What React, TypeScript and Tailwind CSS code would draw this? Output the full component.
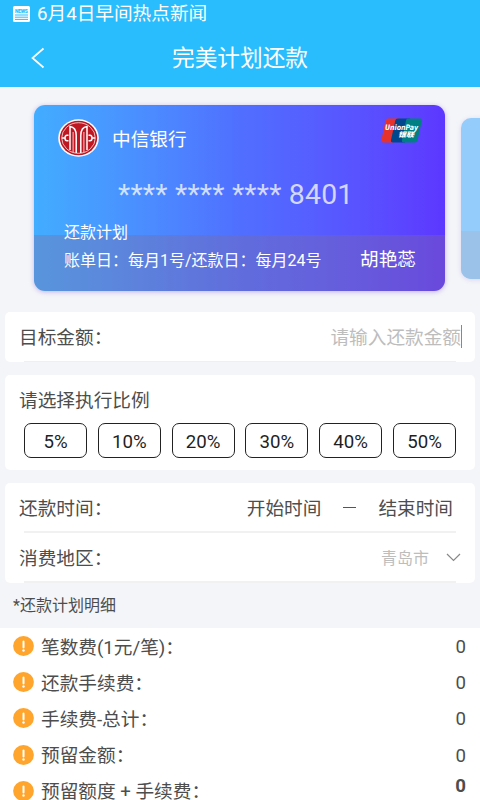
import React, { useState } from "react";

const rates = ["5%", "10%", "20%", "30%", "40%", "50%"];

const fees = [
  { label: "笔数费(1元/笔)：", value: "0" },
  { label: "还款手续费：", value: "0" },
  { label: "手续费-总计：", value: "0" },
  { label: "预留金额：", value: "0" },
  { label: "预留额度 + 手续费：", value: "0", bold: true },
];

const NewsIcon = () => (
  <svg width="17" height="16" viewBox="0 0 17 16">
    <rect width="17" height="16" rx="1.5" fill="#fff" />
    <text
      x="8.5"
      y="6.6"
      textAnchor="middle"
      textLength="13"
      fontSize="5"
      fontWeight="900"
      fill="#29bdfe"
    >
      NEWS
    </text>
    <path d="M2 9h13M2 11.2h13M2 13.4h13" stroke="#29bdfe" strokeWidth="1" />
  </svg>
);

const CiticLogo = () => (
  <svg width="41" height="38" viewBox="0 0 41 38">
    <ellipse cx="20.5" cy="19" rx="20.3" ry="18.8" fill="#fff" />
    <ellipse cx="20.5" cy="19" rx="18.7" ry="17.2" fill="#bf1722" />
    <ellipse
      cx="20.5"
      cy="19"
      rx="16.8"
      ry="15.3"
      fill="none"
      stroke="#fff"
      strokeWidth="0.7"
    />
    <g fill="none" stroke="#fff" strokeWidth="1.5">
      <path d="M12 31V7.5c4 .5 6.2 4 6.2 9V34" />
      <path d="M29 31V7.5c-4 .5-6.2 4-6.2 9V34" />
      <path d="M15.1 33V13M25.9 33V13" strokeWidth="0.8" />
      <path d="M10.5 16.2H9c-1.300 0-2 .8-2 2.800s.7 2.800 2 2.800h1.500M30.5 16.2H32c1.300 0 2 .8 2 2.800s-.7 2.800-2 2.800h-1.500" />
      <path d="M4 19h3M34 19h3" />
    </g>
  </svg>
);

const UnionPayLogo = () => (
  <svg className="overflow-visible" width="41" height="25" viewBox="0 0 41 25">
    <path d="M7 .5h11l-5 24H2.5C.8 24.5 0 23.5.4 22L4.5 2.5C4.8 1.200 5.700.5 7 .5z" fill="#e5322d" />
    <path d="M17 .5h12l-5 24H12c-1.700 0-2.400-1-2-2.500L14.300 2.500C14.600 1.200 15.600.5 17 .5z" fill="#01478b" />
    <path d="M27 .5h12c1.500 0 2.100 1 1.800 2.300L36.500 22.500c-.3 1.300-1.200 2-2.500 2H23c-1.700 0-2.400-1-2-2.500l4-19.500C25.300 1.200 25.800.5 27 .5z" fill="#008082" />
    <g fill="#fff" fontWeight="900" fontStyle="italic">
      <text
        x="4"
        y="12.3"
        fontSize="7.5"
        textLength="33"
        lengthAdjust="spacingAndGlyphs"
        className="font-['DejaVu_Sans',sans-serif]"
      >
        UnionPay
      </text>
      <text x="17" y="19.2" fontSize="6.8" textLength="16" lengthAdjust="spacingAndGlyphs">
        银联
      </text>
    </g>
  </svg>
);

const NoticeIcon = () => (
  <svg width="21" height="20" viewBox="0 0 21 20">
    <ellipse cx="10.5" cy="10" rx="10.4" ry="9.9" fill="#ffa52d" />
    <path d="M10.5 5.5v6" stroke="#fff" strokeWidth="2" strokeLinecap="round" />
    <circle cx="10.5" cy="14.5" r="1.2" fill="#fff" />
  </svg>
);

const BankCard = () => (
  <div className="relative flex h-[186px] w-[411px] shrink-0 flex-col overflow-hidden rounded-[11px] bg-linear-to-r from-[#42adff] via-[#506fff] to-[#5d37ff] text-white">
    <div className="flex h-[66px] items-center pl-6 pr-[23px]">
      <CiticLogo />
      <span className="ml-[13px] pt-1">中信银行</span>
      <div className="-mt-4 ml-auto">
        <UnionPayLogo />
      </div>
    </div>
    <div className="h-[50px] pl-[84px] pt-1 text-[28.4px] leading-[40px] tracking-[0.2px] text-white/75">
      **** **** **** 8401
    </div>
    <div className="h-[14px] pl-[30px] text-base leading-6">
      <span className="relative z-10">还款计划</span>
    </div>
    <div className="flex h-14 justify-between bg-[#806b9b]/35 pl-[30px] pr-[29px]">
      <span className="pt-[13px] text-base leading-[26px]">
        账单日：每月1号/还款日：每月24号
      </span>
      <span className="pt-[11px] leading-[28px]">胡艳蕊</span>
    </div>
  </div>
);

const App: React.FC = () => {
  const [rate, setRate] = useState("");

  return (
    <div
      lang="zh-CN"
      className="flex h-[800px] w-[480px] flex-col overflow-hidden bg-[#f4f5f8] font-[Roboto,'Noto_Sans_CJK_SC',sans-serif] text-[18.67px] text-[#4d4d4d]"
    >
      <header className="h-[87px] shrink-0 bg-[#29bdfe] text-white">
        <div className="flex h-7 items-center pl-[13px]">
          <NewsIcon />
          <span className="ml-[7px] leading-7">6月4日早间热点新闻</span>
        </div>
        <div className="flex h-[59px] items-center px-[31px]">
          <svg width="14" height="22" viewBox="0 0 14 22" fill="none" stroke="#fff" strokeWidth="1.7">
            <path d="M12.5 1.5L1.5 11l11 9.5" />
          </svg>
          <h1 className="flex-1 pr-3.5 pt-[3px] text-center text-[22.67px]">完美计划还款</h1>
        </div>
      </header>

      <div className="flex h-[225px] shrink-0 gap-4 overflow-hidden border-t border-white pl-[34px] pt-[17px]">
        <div className="h-[186px] rounded-[11px] shadow-[0_1px_5px_rgba(120,80,220,0.4)]">
          <BankCard />
        </div>
        <div className="mt-[13px] flex h-[161px] w-[60px] shrink-0 flex-col overflow-hidden rounded-[10px] bg-[#94cdfc] shadow-[0_1px_5px_rgba(120,80,220,0.2)]">
          <div className="mt-auto h-12 bg-[#9bc2e9]" />
        </div>
      </div>

      <div className="flex shrink-0 flex-col gap-[13px] px-[5px]">
        <section className="flex h-[50px] flex-col rounded-[5px] bg-white">
          <label className="flex h-[49px] items-center justify-between pl-3.5 pr-[13px] pt-[3px]">
            目标金额：
            <span className="flex items-center text-[#bdbdbd]">
              请输入还款金额
              <span className="-mt-1 h-[23px] w-px bg-[#888]" />
            </span>
          </label>
          <div className="mx-[19px] h-px bg-[#efeff1]" />
        </section>

        <section className="h-[95px] rounded-[5px] bg-white px-[19px]">
          <p className="-ml-[5px] h-[48px] pt-0.5 leading-[49px]">请选择执行比例</p>
          <div className="flex justify-between">
            {rates.map((item) => (
              <button
                key={item}
                onClick={() => setRate(item)}
                className={`h-[35px] w-[63px] rounded-[7px] border-[1.5px] border-[#222] pt-0.5 text-[#1f1f1f] ${rate === item ? "bg-gray-100" : ""}`}
              >
                {item}
              </button>
            ))}
          </div>
        </section>

        <section className="h-[100px] rounded-[5px] bg-white">
          <div className="flex h-12 items-center pl-3.5 pr-[22px] pt-[3px]">
            <span>还款时间：</span>
            <span className="ml-auto">开始时间</span>
            <span className="-mt-0.5 mx-[22px] h-[1.5px] w-[13px] bg-[#555]" />
            <span>结束时间</span>
          </div>
          <div className="mx-[19px] h-0.5 bg-[#f1f1f2]" />
          <div className="flex h-12 items-center pl-3.5 pr-3.5 pt-[3px]">
            <span>消费地区：</span>
            <span className="ml-auto text-base text-[#bdbdbd]">青岛市</span>
            <svg className="-mt-0.5 ml-[17px]" width="15" height="9" viewBox="0 0 15 9" fill="none" stroke="#888" strokeWidth="1.2">
              <path d="M1 1l6.5 6.5L14 1" />
            </svg>
          </div>
          <div className="mx-[19px] h-0.5 bg-[#f1f1f2]" />
        </section>
      </div>

      <p className="h-[45px] shrink-0 pl-[13px] text-base leading-[45px]">*还款计划明细</p>

      <ul className="flex-1 overflow-hidden bg-white">
        {fees.map((fee) => (
          <li key={fee.label} className="flex h-[36.2px] items-center pl-[13px] pr-3.5">
            <NoticeIcon />
            <span className="ml-[7px] pt-[3px] leading-7">{fee.label}</span>
            <span className={fee.bold ? "-mt-2.5 ml-auto font-bold" : "ml-auto pt-0.5"}>
              {fee.value}
            </span>
          </li>
        ))}
      </ul>
    </div>
  );
};

export default App;
